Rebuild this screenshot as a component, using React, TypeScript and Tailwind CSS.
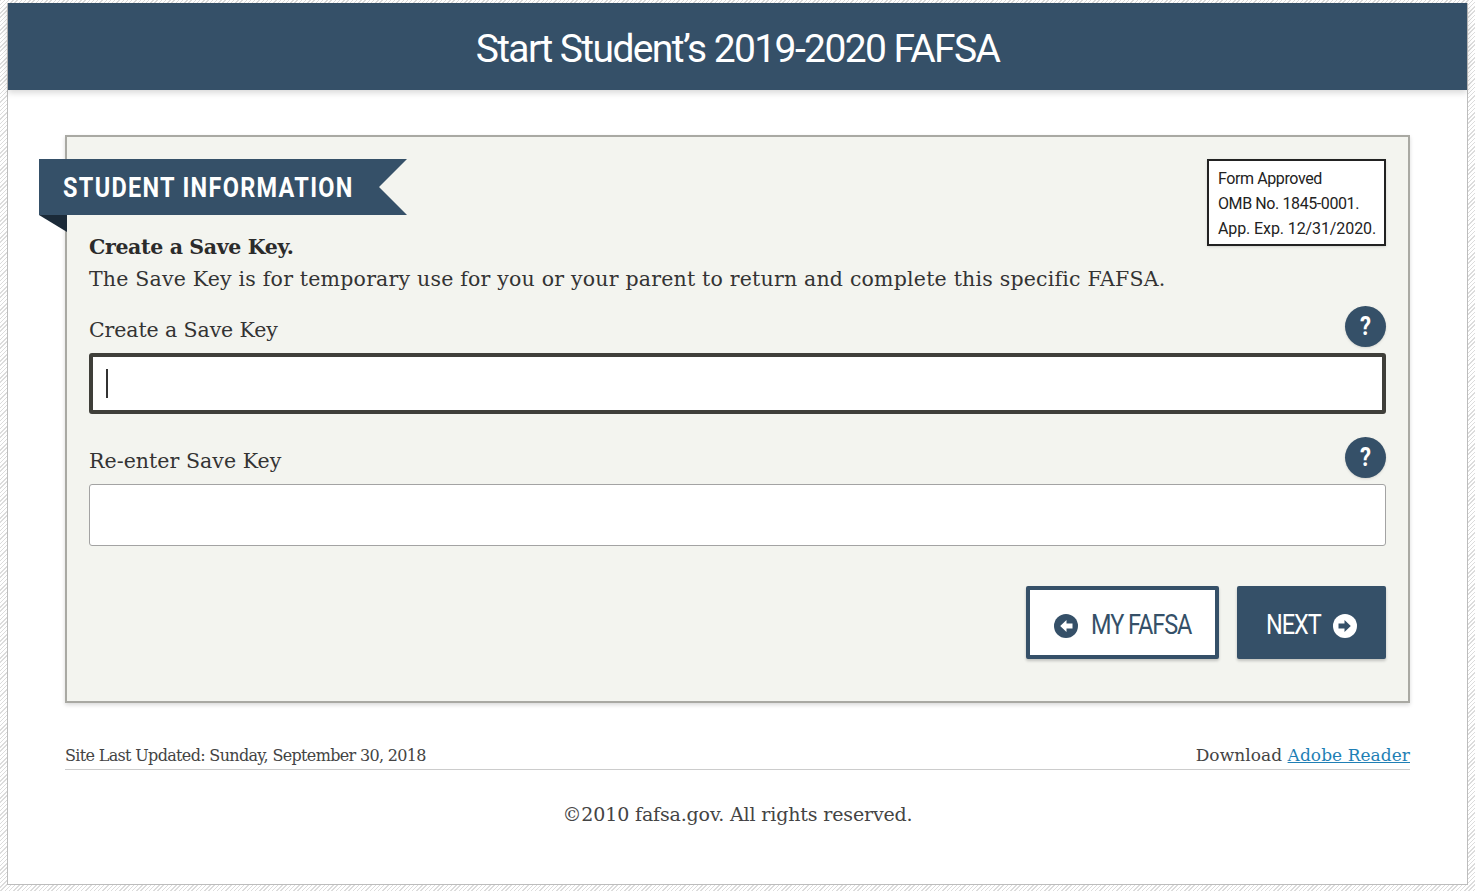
const serif = "font-['DejaVu_Serif','Liberation_Serif',serif]"
const sans = "font-['Roboto','Liberation_Sans',sans-serif]"

function ArrowCircle({ dir, fg, bg }: { dir: 'left' | 'right'; fg: string; bg: string }) {
  return (
    <svg width="24" height="24" viewBox="0 0 24 24" className={dir === 'left' ? '' : 'rotate-180'}>
      <circle cx="12" cy="12" r="12" fill={bg} />
      <path d="M12.5 6 L6.2 12 L12.5 18 L12.5 14.5 L18.5 14.5 L18.5 9.5 L12.5 9.5 Z" fill={fg} />
    </svg>
  )
}

function HelpButton() {
  return (
    <div className={`w-[41px] h-[41px] rounded-full bg-[#355068] text-white flex items-center justify-center text-[26px] font-bold shadow-sm ${sans}`}>
      <span className="inline-block scale-x-[0.85]">?</span>
    </div>
  )
}

export default function App() {
  return (
    <div className="w-[1475px] h-[891px] overflow-hidden pt-[3px] pl-[7px] pr-[7px] pb-[6px] bg-[repeating-linear-gradient(135deg,#dcdcdc_0px,#dcdcdc_1px,#ffffff_1px,#ffffff_3px)]">
      <div className="h-[882px] bg-white border-r border-b border-l border-[#bdbdbd] flex flex-col">
        {/* header */}
        <div className="h-[87px] shrink-0 bg-[#355068] shadow-[0_3px_6px_rgba(0,0,0,0.15)] flex items-center justify-center pt-[6px]">
          <h1 className={`text-white text-[39px] font-normal tracking-[-1.6px] ${sans}`}>Start Student’s 2019-2020 FAFSA</h1>
        </div>

        <div className="pt-[45px] pl-[57px] pr-[57px]">
          {/* form panel */}
          <div className="relative h-[568px] bg-[#f3f4ef] border-2 border-[#a9a9a3] shadow-[0_2px_4px_rgba(0,0,0,0.15)] pt-[22px] pr-[22px] pl-[22px]">
            <div className="absolute right-[22px] top-[22px] w-[179px] h-[87px] bg-white border-2 border-[#222222] pl-[9px] pt-[5px] shadow-sm">
              <div className={`text-[16px] leading-[25px] tracking-[-0.4px] text-[#222222] whitespace-nowrap ${sans}`}>
                <div>Form Approved</div>
                <div>OMB No. 1845-0001.</div>
                <div className="tracking-[-0.1px]">App. Exp. 12/31/2020.</div>
              </div>
            </div>

            {/* ribbon */}
            <div className="-ml-[50px] relative w-[368px]">
              <div className="h-[56px] bg-[#355068] [clip-path:polygon(0_0,100%_0,92.4%_50%,100%_100%,0_100%)] flex items-center pl-[24px] pt-[3px]">
                <span className={`inline-block origin-left scale-x-[0.87] whitespace-nowrap text-white text-[27px] font-bold tracking-[1.5px] ${sans}`}>STUDENT INFORMATION</span>
              </div>
              <div className="w-[28px] h-[17px] bg-[#1b2a38] [clip-path:polygon(0_0,100%_0,100%_100%)]" />
            </div>

            <div className={`-mt-[1px] text-[#333333] ${serif}`}>
              <p className="font-bold text-[20.5px] leading-[32px] text-[#2b2b2b] tracking-[-0.35px]">Create a Save Key.</p>
              <p className="text-[20.5px] leading-[32px] tracking-[0.2px]">The Save Key is for temporary use for you or your parent to return and complete this specific FAFSA.</p>
            </div>

            <div className="mt-[9px] flex items-end justify-between h-[49px]">
              <label className={`text-[#333333] text-[20.5px] tracking-[-0.1px] pb-[7px] ${serif}`}>Create a Save Key</label>
              <div className="pb-[6px]"><HelpButton /></div>
            </div>
            <div className="h-[61px] bg-white border-4 border-[#3f3f3a] rounded-[3px] flex items-center pl-[13px]">
              <div className="w-[2px] h-[29px] bg-[#333333]" />
            </div>

            <div className="mt-[21px] flex items-end justify-between h-[49px]">
              <label className={`text-[#333333] text-[20.5px] tracking-[0.05px] pb-[7px] ${serif}`}>Re-enter Save Key</label>
              <div className="pb-[6px]"><HelpButton /></div>
            </div>
            <div className="h-[62px] bg-white border border-[#a3a3a3] rounded-[3px]" />

            <div className="mt-[40px] flex justify-end gap-[18px]">
              <div className={`w-[193px] h-[73px] pt-[6px] bg-white border-4 border-[#355068] rounded-[2px] shadow-[0_2px_3px_rgba(0,0,0,0.2)] flex items-center justify-center gap-[13px] text-[#355068] text-[27px] tracking-[-1.2px] ${sans}`}>
                <ArrowCircle dir="left" fg="#ffffff" bg="#355068" />
                <span className="inline-block w-[100px] origin-left scale-x-[0.87] whitespace-nowrap">MY FAFSA</span>
              </div>
              <div className={`w-[149px] h-[73px] pt-[6px] bg-[#355068] rounded-[2px] shadow-[0_2px_3px_rgba(0,0,0,0.2)] flex items-center justify-center gap-[13px] text-white text-[27px] tracking-[-1.2px] ${sans}`}>
                <span className="inline-block w-[54px] origin-left scale-x-[0.87] whitespace-nowrap">NEXT</span>
                <ArrowCircle dir="right" fg="#355068" bg="#ffffff" />
              </div>
            </div>
          </div>

          {/* footer */}
          <div className={`mt-[39px] h-[28px] border-b border-[#cccccc] flex items-center justify-between text-[#444444] ${serif}`}>
            <span className="text-[16px] tracking-[-0.67px]">Site Last Updated: Sunday, September 30, 2018</span>
            <span className="text-[17px] tracking-[0.05px]">
              Download <a href="#" className="text-[#1f7fb5] underline">Adobe Reader</a>
            </span>
          </div>
          <p className={`mt-[30px] text-center text-[19px] tracking-[-0.15px] text-[#444444] ${serif}`}>©2010 fafsa.gov. All rights reserved.</p>
        </div>
      </div>
    </div>
  )
}
